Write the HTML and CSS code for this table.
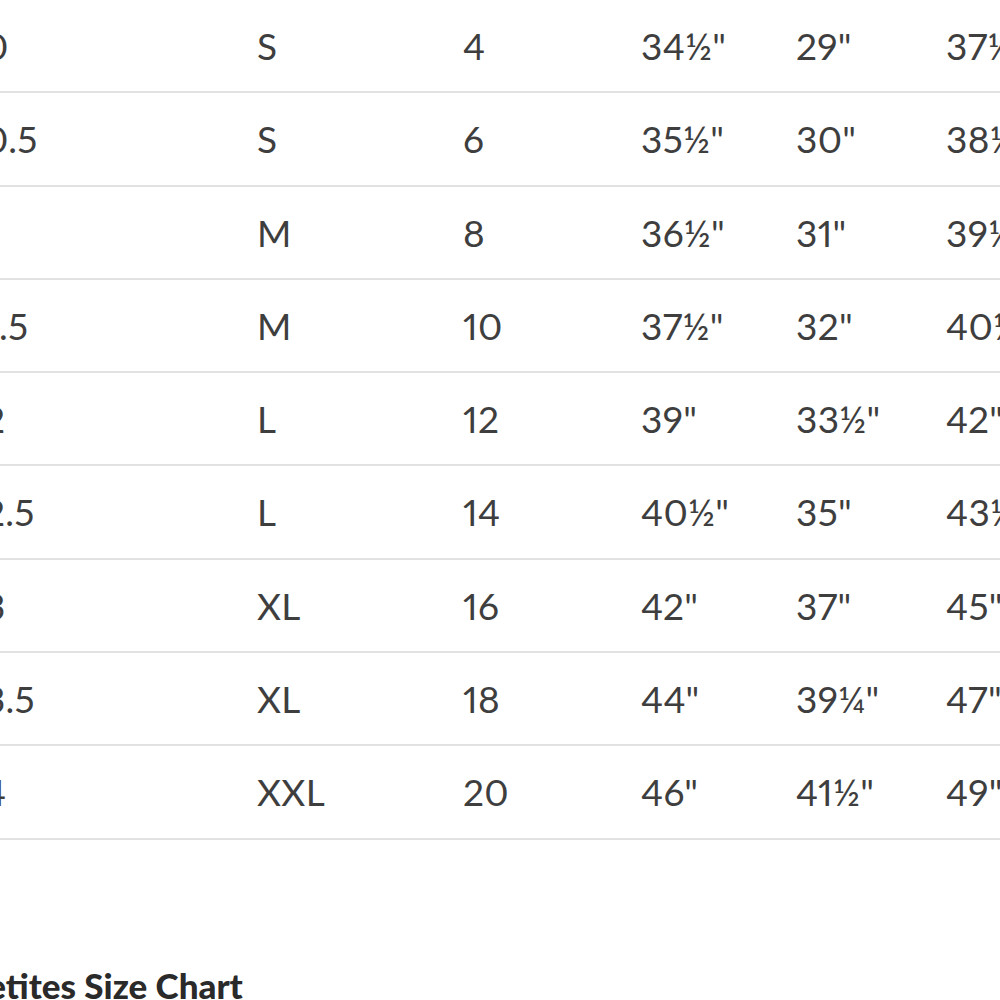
FILE: index.html
```html
<!DOCTYPE html>
<html lang="en">
<head>
<meta charset="utf-8">
<title>Size Chart</title>
<link rel="stylesheet" href="styles.css">
</head>
<body>
<div class="page">
  <table class="chart">
    <colgroup>
      <col class="c1"><col class="c2"><col class="c3"><col class="c4"><col class="c5"><col class="c6">
    </colgroup>
    <tbody>
      <tr><td>10</td><td>S</td><td>4</td><td>34½"</td><td>29"</td><td>37½"</td></tr>
      <tr><td>10.5</td><td>S</td><td>6</td><td>35½"</td><td>30"</td><td>38½"</td></tr>
      <tr><td>11</td><td>M</td><td>8</td><td>36½"</td><td>31"</td><td>39½"</td></tr>
      <tr><td>11.5</td><td>M</td><td>10</td><td>37½"</td><td>32"</td><td>40½"</td></tr>
      <tr><td>12</td><td>L</td><td>12</td><td>39"</td><td>33½"</td><td>42"</td></tr>
      <tr><td>12.5</td><td>L</td><td>14</td><td>40½"</td><td>35"</td><td>43½"</td></tr>
      <tr><td>13</td><td>XL</td><td>16</td><td>42"</td><td>37"</td><td>45"</td></tr>
      <tr><td>13.5</td><td>XL</td><td>18</td><td>44"</td><td>39¼"</td><td>47"</td></tr>
      <tr><td>14</td><td>XXL</td><td>20</td><td>46"</td><td>41½"</td><td>49"</td></tr>
    </tbody>
  </table>
  <h2 class="title">Petites Size Chart</h2>
</div>
</body>
</html>
```
FILE: styles.css
```css
html, body {
  margin: 0;
  padding: 0;
  background: #ffffff;
  overflow: hidden;
}

body {
  width: 1000px;
  height: 1000px;
  font-family: Lato, "Open Sans", sans-serif;
  color: #3e3e3e;
}

.page {
  margin-left: -31px;
  margin-top: 0;
  width: 1100px;
}

.chart {
  border-collapse: collapse;
  table-layout: fixed;
  width: 1100px;
}

.c1 { width: 288px; }
.c2 { width: 206px; }
.c3 { width: 178px; }
.c4 { width: 155px; }
.c5 { width: 150px; }
.c6 { width: 123px; }

.chart td {
  height: 91.3px;
  padding: 0;
  font-size: 37px;
  line-height: 91.3px;
  font-weight: 400;
  letter-spacing: 0.3px;
  font-variant-numeric: proportional-nums;
  border-bottom: 2px solid #e2e2e2;
  white-space: nowrap;
  vertical-align: middle;
}

.title {
  margin: 124px 0 0 -3px;
  font-size: 35px;
  line-height: 42px;
  font-weight: 900;
  color: #2a2a2a;
}
```
